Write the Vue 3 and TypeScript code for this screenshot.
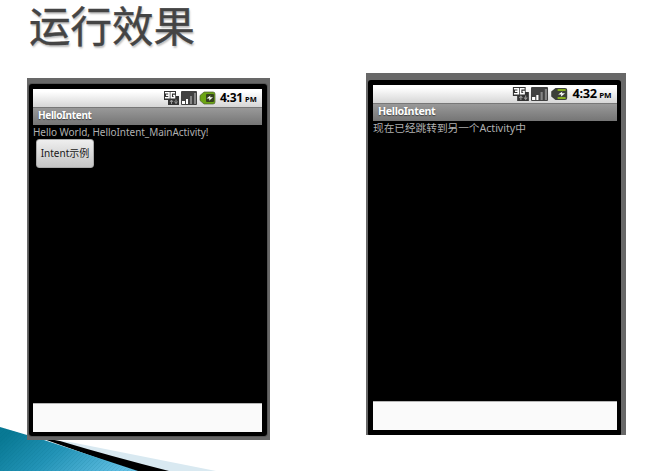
<script setup lang="ts">
interface Phone {
  id: string
  time: string
  message: string
  button?: string
  charging: boolean
}

const phones: Phone[] = [
  { id: 'first', time: '4:31', message: 'Hello World, HelloIntent_MainActivity!', button: 'Intent示例', charging: false },
  { id: 'second', time: '4:32', message: '现在已经跳转到另一个Activity中', charging: true },
]
</script>

<template>
  <main class="slide">
    <svg class="swoosh" viewBox="0 0 220 45" aria-hidden="true">
      <defs>
        <linearGradient id="wave" x1="0" y1="0.3" x2="1" y2="0.7">
          <stop offset="0" stop-color="#087994" />
          <stop offset="0.45" stop-color="#2394b7" />
          <stop offset="1" stop-color="#62bfe3" />
        </linearGradient>
        <pattern id="stripes" width="4" height="4" patternUnits="userSpaceOnUse">
          <path d="M-1 5L5 -1M-1 1L1 -1M3 5L5 3" stroke="#04607e" stroke-opacity=".12" stroke-width="1" />
        </pattern>
      </defs>
      <path d="M42 13L70 16L216 45H160Z" fill="#d9e9f1" />
      <path d="M38 11L60 15Q110 30 169 45H134Z" fill="#000" />
      <path d="M0 1L44 14L138 45H0Z" fill="url(#wave)" />
      <path d="M0 1L44 14L138 45H0Z" fill="url(#stripes)" />
    </svg>
    <h1 class="heading">运行效果</h1>
    <div class="phones">
      <section v-for="phone in phones" :key="phone.id" class="phone" :class="phone.id">
        <div class="bezel">
          <div class="screen">
            <div class="status">
              <div class="indicators">
                <svg class="icons" viewBox="0 0 56 16" aria-hidden="true">
                  <path d="M1 0H13V5H16V14H5V9H1Z" fill="#333" />
                  <path d="M2 1.800H6V6.800H2M3 4.300H6M12 1.800H8.200V6.800H11.500V4.500H10" fill="none" stroke="#fff" stroke-width="1.500" />
                  <path d="M8.500 13V9M7 11L8.500 9L10 11M13 8.500V12.500M11.500 10.500L13 12.500L14.500 10.500" fill="none" stroke="#999" />
                  <rect x="18" y="0" width="16" height="14" rx="1" fill="#414141" />
                  <path d="M19 10h3v3H19zM23 8h2v5h-2z" fill="#fff" />
                  <path d="M27 5h2v8h-2zM31 2h2v11h-2z" fill="#858585" />
                  <path v-if="phone.charging" d="M41 1H50Q52 1 52 3V11Q52 13 50 13H41L37 9.500V4.500Z" fill="#3c4038" />
                  <path v-else d="M41 1H50Q52 1 52 3V11Q52 13 50 13H41L37 9.500V4.500Z" fill="#6ca514" stroke="#4b5c30" stroke-width=".7" />
                  <path v-if="phone.charging" d="M43 3h7.500M43 11h7.500" stroke="#a0d21a" stroke-width="1.500" />
                  <rect v-else x="43" y="3" width="8" height="8" rx="1" fill="#35421f" />
                  <path d="M43.500 7.500L47.500 4.500L47 6.300H50L46 9.800L46.500 7.500Z" fill="#fff" />
                </svg>
                <span class="time">{{ phone.time }}</span>
                <span class="period">PM</span>
              </div>
            </div>
            <div class="titlebar"><span>HelloIntent</span></div>
            <div class="content">
              <p class="message">{{ phone.message }}</p>
              <button v-if="phone.button" class="action" type="button">{{ phone.button }}</button>
            </div>
            <div class="footer"></div>
          </div>
        </div>
      </section>
    </div>
  </main>
</template>

<style>
body {
  background: #fff;
}
</style>

<style scoped>
.slide {
  position: relative;
  width: 652px;
  height: 471px;
  overflow: hidden;
  background: #fff;
  font-family: "Noto Sans", "Noto Sans CJK SC", sans-serif;
}
.swoosh {
  position: absolute;
  left: 0;
  bottom: 0;
  width: 220px;
  height: 45px;
}
.heading {
  margin: 0;
  padding: 0 0 0 29px;
  height: 73px;
  box-sizing: border-box;
  font: 400 41.5px/48px "Noto Sans CJK SC", sans-serif;
  color: #444;
  -webkit-text-stroke: 0.4px #444;
  text-shadow: 1px 2px 2px #bbb;
}
.phones {
  position: relative;
  display: flex;
  align-items: flex-start;
  gap: 96px;
  padding-left: 27px;
}
.phone {
  box-sizing: border-box;
  height: 362px;
  background: #686868;
}
.first {
  width: 243px;
  margin-top: 5px;
  padding: 6px 3px 4px 2px;
}
.second {
  width: 260px;
  padding: 7px 5px 0 2px;
}
.bezel {
  box-sizing: border-box;
  height: 100%;
  padding: 5px 5px 4px 4px;
  border-radius: 3px;
  background: #000;
}
.first .bezel {
  box-shadow: 0 0 0 1px #555;
}
.second .bezel {
  padding: 5px 4px 5px 5px;
  border-radius: 3px 3px 1px 1px;
}
.screen {
  height: 100%;
  display: flex;
  flex-direction: column;
}
.status {
  flex: 0 0 18px;
  display: flex;
  justify-content: flex-end;
  padding-right: 4px;
  background: linear-gradient(#fff 15%, #eee 50%, #d6d6d6);
  color: #000;
  font-weight: 700;
}
.indicators {
  display: flex;
  align-items: center;
  height: 18px;
}
.second .indicators {
  transform: scaleX(1.065);
  transform-origin: right;
}
.icons {
  width: 56px;
  height: 16px;
  margin-top: 2px;
}
.time {
  width: 24px;
  margin-left: 1px;
  font-size: 12px;
  line-height: 18px;
  letter-spacing: -0.3px;
}
.period {
  width: 13px;
  margin-left: 1px;
  padding-top: 3px;
  font-size: 7.5px;
  line-height: 15px;
}
.titlebar {
  flex: 0 0 18px;
  box-sizing: border-box;
  padding-left: 5px;
  border-top: 1px solid #777;
  background: linear-gradient(#999, #757575);
  color: #fff;
  font-size: 10px;
  font-weight: 700;
  line-height: 15px;
  letter-spacing: -0.35px;
  text-shadow: 0 1px 1px #444;
}
.titlebar span {
  display: inline-block;
}
.content {
  flex: 1;
  background: #000;
}
.message {
  margin: 0;
  font-size: 10px;
  line-height: 14px;
  letter-spacing: -0.05px;
  color: #b0b0b0;
  white-space: nowrap;
}
.second .message,
.second .titlebar span {
  transform: scaleX(1.07);
  transform-origin: left;
}
.action {
  display: block;
  width: 58px;
  height: 29px;
  margin: 0 0 0 3px;
  padding: 0;
  border: 1px solid #aaa;
  border-radius: 3px;
  background: linear-gradient(#eee, #c5c5c5);
  color: #171717;
  font: 10px/27px "Noto Sans", "Noto Sans CJK SC", sans-serif;
  white-space: nowrap;
}
.footer {
  flex: 0 0 29px;
  box-sizing: border-box;
  border-top: 1px solid #b5b5b5;
  background: #fafafa;
}
</style>
